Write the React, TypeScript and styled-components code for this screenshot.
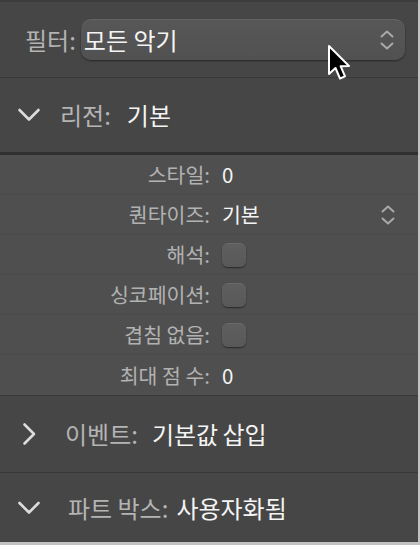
import React from "react";
import styled, { createGlobalStyle } from "styled-components";

const GlobalStyle = createGlobalStyle`
  html, body {
    margin: 0;
    padding: 0;
    background: #c2c2c2;
  }
  body {
    font-family: "Noto Sans CJK KR", "Noto Sans", sans-serif;
    -webkit-font-smoothing: antialiased;
  }
`;

const Panel = styled.div`
  position: relative;
  width: 418px;
  height: 542px;
  background: #464646;
  display: flex;
  flex-direction: column;
  overflow: hidden;
`;

const FilterRow = styled.div`
  flex: none;
  display: flex;
  align-items: center;
  padding-left: 25px;
  gap: 5px;
  border-top: 2px solid #3c3c3c;
  border-bottom: 1px solid #383838;
  box-sizing: border-box;
  height: 78px;
`;

const FilterLabel = styled.span`
  font-size: 24px;
  color: #b3b3b3;
  line-height: 1;
`;

const Select = styled.div`
  width: 324px;
  height: 41px;
  box-sizing: border-box;
  border-radius: 10px;
  background: linear-gradient(#575757, #515151);
  border-top: 1px solid #646464;
  box-shadow: 0 1px 2px rgba(0, 0, 0, 0.45);
  display: flex;
  align-items: center;
  justify-content: space-between;
  padding: 0 10px 0 3px;
`;

const SelectValue = styled.span`
  font-size: 24px;
  color: #f4f4f4;
  line-height: 1;
`;

const SectionHeader = styled.div<{ $h: number }>`
  height: ${(p) => p.$h}px;
  flex: none;
  display: flex;
  align-items: center;
  padding-left: 17px;
  box-sizing: border-box;
`;

const ChevronBox = styled.span`
  width: 24px;
  height: 24px;
  display: flex;
  align-items: center;
  justify-content: center;
  flex: none;
`;

const HeaderLabel = styled.span<{ $indent: number; $gap: number }>`
  margin-left: ${(p) => p.$indent}px;
  margin-right: ${(p) => p.$gap}px;
  font-size: 24px;
  color: #b4b4b4;
  line-height: 1;
`;

const HeaderValue = styled.span`
  font-size: 24px;
  color: #f4f4f4;
  line-height: 1;
  word-spacing: -1px;
`;

const Divider = styled.div`
  height: 1px;
  background: #393939;
  flex: none;
`;

const PropList = styled.div`
  flex: none;
  background: #4f4f4f;
  border-top: 3px solid #303030;
  border-bottom: 1px solid #3a3a3a;
  display: flex;
  flex-direction: column;
`;

const PropRow = styled.div<{ $last?: boolean }>`
  height: 40px;
  box-sizing: border-box;
  display: grid;
  grid-template-columns: 210px 1fr auto;
  align-items: center;
  column-gap: 12px;
  padding-right: 22px;
  border-bottom: ${(p) => (p.$last ? "none" : "1px solid #4a4a4a")};
`;

const PropLabel = styled.span`
  text-align: right;
  font-size: 20.5px;
  color: #b2b2b2;
  line-height: 1;
  white-space: nowrap;
`;

const PropValue = styled.span`
  font-size: 20.5px;
  color: #f4f4f4;
  line-height: 1;
`;

const Checkbox = styled.span`
  width: 24px;
  height: 24px;
  box-sizing: border-box;
  border-radius: 6px;
  background: linear-gradient(#5f5f5f, #585858);
  border-top: 1px solid #6a6a6a;
  box-shadow: 0 1px 1.5px rgba(0, 0, 0, 0.5);
  display: block;
`;

const Cursor = styled.svg`
  position: absolute;
  left: 326px;
  top: 44px;
`;

const UpDown = ({ color = "#a9a9a9" }: { color?: string }) => (
  <svg width="16" height="22" viewBox="0 0 16 22" fill="none">
    <path
      d="M2.5 7.5 L8 2.5 L13.5 7.5 M2.5 14.5 L8 19.5 L13.5 14.5"
      stroke={color}
      strokeWidth="2"
      strokeLinecap="round"
      strokeLinejoin="round"
    />
  </svg>
);

const ChevronDown = () => (
  <svg width="24" height="16" viewBox="0 0 24 16" fill="none">
    <path
      d="M2.5 3 L12 12.5 L21.5 3"
      stroke="#dcdcdc"
      strokeWidth="2.6"
      strokeLinecap="round"
      strokeLinejoin="round"
    />
  </svg>
);

const ChevronRight = () => (
  <svg width="16" height="24" viewBox="0 0 16 24" fill="none">
    <path
      d="M3.5 2.5 L13 12 L3.5 21.5"
      stroke="#dcdcdc"
      strokeWidth="2.6"
      strokeLinecap="round"
      strokeLinejoin="round"
    />
  </svg>
);

type Prop = { label: string; value?: string; kind: "text" | "check" | "select" };

const props: Prop[] = [
  { label: "스타일:", value: "0", kind: "text" },
  { label: "퀀타이즈:", value: "기본", kind: "select" },
  { label: "해석:", kind: "check" },
  { label: "싱코페이션:", kind: "check" },
  { label: "겹침 없음:", kind: "check" },
  { label: "최대 점 수:", value: "0", kind: "text" },
];

export default function App() {
  return (
    <>
      <GlobalStyle />
      <Panel>
        <FilterRow>
          <FilterLabel>필터:</FilterLabel>
          <Select>
            <SelectValue>모든 악기</SelectValue>
            <UpDown />
          </Select>
        </FilterRow>

        <SectionHeader $h={74}>
          <ChevronBox>
            <ChevronDown />
          </ChevronBox>
          <HeaderLabel $indent={19} $gap={16}>리전:</HeaderLabel>
          <HeaderValue>기본</HeaderValue>
        </SectionHeader>

        <PropList>
          {props.map((p, i) => (
            <PropRow key={p.label} $last={i === props.length - 1}>
              <PropLabel>{p.label}</PropLabel>
              {p.kind === "check" ? (
                <Checkbox />
              ) : (
                <PropValue>{p.value}</PropValue>
              )}
              {p.kind === "select" ? <UpDown /> : <span />}
            </PropRow>
          ))}
        </PropList>

        <SectionHeader $h={76}>
          <ChevronBox>
            <ChevronRight />
          </ChevronBox>
          <HeaderLabel $indent={24} $gap={14}>이벤트:</HeaderLabel>
          <HeaderValue>기본값 삽입</HeaderValue>
        </SectionHeader>
        <Divider />
        <SectionHeader $h={70}>
          <ChevronBox>
            <ChevronDown />
          </ChevronBox>
          <HeaderLabel $indent={27} $gap={8}>파트 박스:</HeaderLabel>
          <HeaderValue>사용자화됨</HeaderValue>
        </SectionHeader>

        <Cursor width="26" height="40" viewBox="0 0 26 40">
          <path
            d="M3 2 L3 30 L9.5 24 L14 34.5 L19 32.3 L14.6 22.2 L23 22 Z"
            fill="#000"
            stroke="#fff"
            strokeWidth="2"
            strokeLinejoin="round"
          />
        </Cursor>
      </Panel>
    </>
  );
}
